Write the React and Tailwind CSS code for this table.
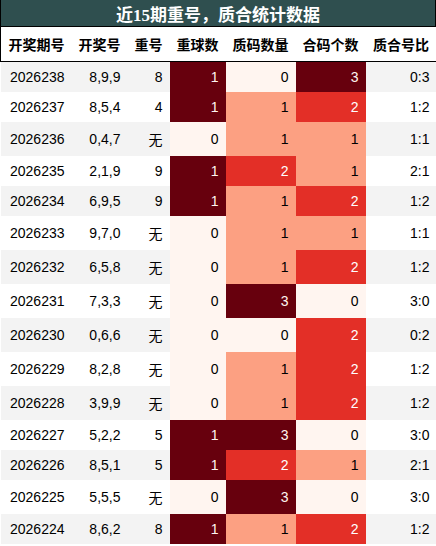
const rows = [
  ['2026238', '8,9,9', '8', 1, 0, 3, '0:3'],
  ['2026237', '8,5,4', '4', 1, 1, 2, '1:2'],
  ['2026236', '0,4,7', '无', 0, 1, 1, '1:1'],
  ['2026235', '2,1,9', '9', 1, 2, 1, '2:1'],
  ['2026234', '6,9,5', '9', 1, 1, 2, '1:2'],
  ['2026233', '9,7,0', '无', 0, 1, 1, '1:1'],
  ['2026232', '6,5,8', '无', 0, 1, 2, '1:2'],
  ['2026231', '7,3,3', '无', 0, 3, 0, '3:0'],
  ['2026230', '0,6,6', '无', 0, 0, 2, '0:2'],
  ['2026229', '8,2,8', '无', 0, 1, 2, '1:2'],
  ['2026228', '3,9,9', '无', 0, 1, 2, '1:2'],
  ['2026227', '5,2,2', '5', 1, 3, 0, '3:0'],
  ['2026226', '8,5,1', '5', 1, 2, 1, '2:1'],
  ['2026225', '5,5,5', '无', 0, 3, 0, '3:0'],
  ['2026224', '8,6,2', '8', 1, 1, 2, '1:2'],
];

const headers = ['开奖期号', '开奖号', '重号', '重球数', '质码数量', '合码个数', '质合号比'];

// Reds colormap steps for 0..3
const heat3 = [
  'bg-[#fff5f0] text-black',
  'bg-[#fca082] text-black',
  'bg-[#e32f27] text-white',
  'bg-[#67000d] text-[#fff5f0]',
];
const heat1 = ['bg-[#fff5f0] text-black', 'bg-[#67000d] text-[#fff5f0]'];

const cell = 'px-[7px] py-[7px] text-right leading-[normal]';

export default function App() {
  return (
    <div className="w-[436px] bg-white font-['Liberation_Sans','Noto_Sans_CJK_SC',sans-serif] text-[14px] text-black">
      <div className="h-[27px] flex items-center justify-center bg-[#2f4f4f] border-x border-b border-black text-white font-bold text-[17px] leading-[normal] font-['Liberation_Serif','Noto_Sans_CJK_SC',serif]">
        近15期重号，质合统计数据
      </div>
      <table className="table-fixed border-collapse w-[436px]">
        <colgroup>
          <col className="w-[71px]" />
          <col className="w-[56px]" />
          <col className="w-[42px]" />
          <col className="w-[56px]" />
          <col className="w-[70px]" />
          <col className="w-[70px]" />
          <col className="w-[71px]" />
        </colgroup>
        <thead>
          <tr className="border-x border-b border-black">
            {headers.map((h) => (
              <th key={h} className={`${cell} font-bold whitespace-nowrap`}>{h}</th>
            ))}
          </tr>
        </thead>
        <tbody>
          {rows.map((r, i) => (
            <tr key={r[0]} className={i % 2 === 0 ? 'bg-[#f3f3f3]' : 'bg-white'}>
              <td className={cell}>{r[0]}</td>
              <td className={cell}>{r[1]}</td>
              <td className={cell}>{r[2]}</td>
              <td className={`${cell} ${heat1[r[3]]}`}>{r[3]}</td>
              <td className={`${cell} ${heat3[r[4]]}`}>{r[4]}</td>
              <td className={`${cell} ${heat3[r[5]]}`}>{r[5]}</td>
              <td className={cell}>{r[6]}</td>
            </tr>
          ))}
        </tbody>
      </table>
    </div>
  );
}
